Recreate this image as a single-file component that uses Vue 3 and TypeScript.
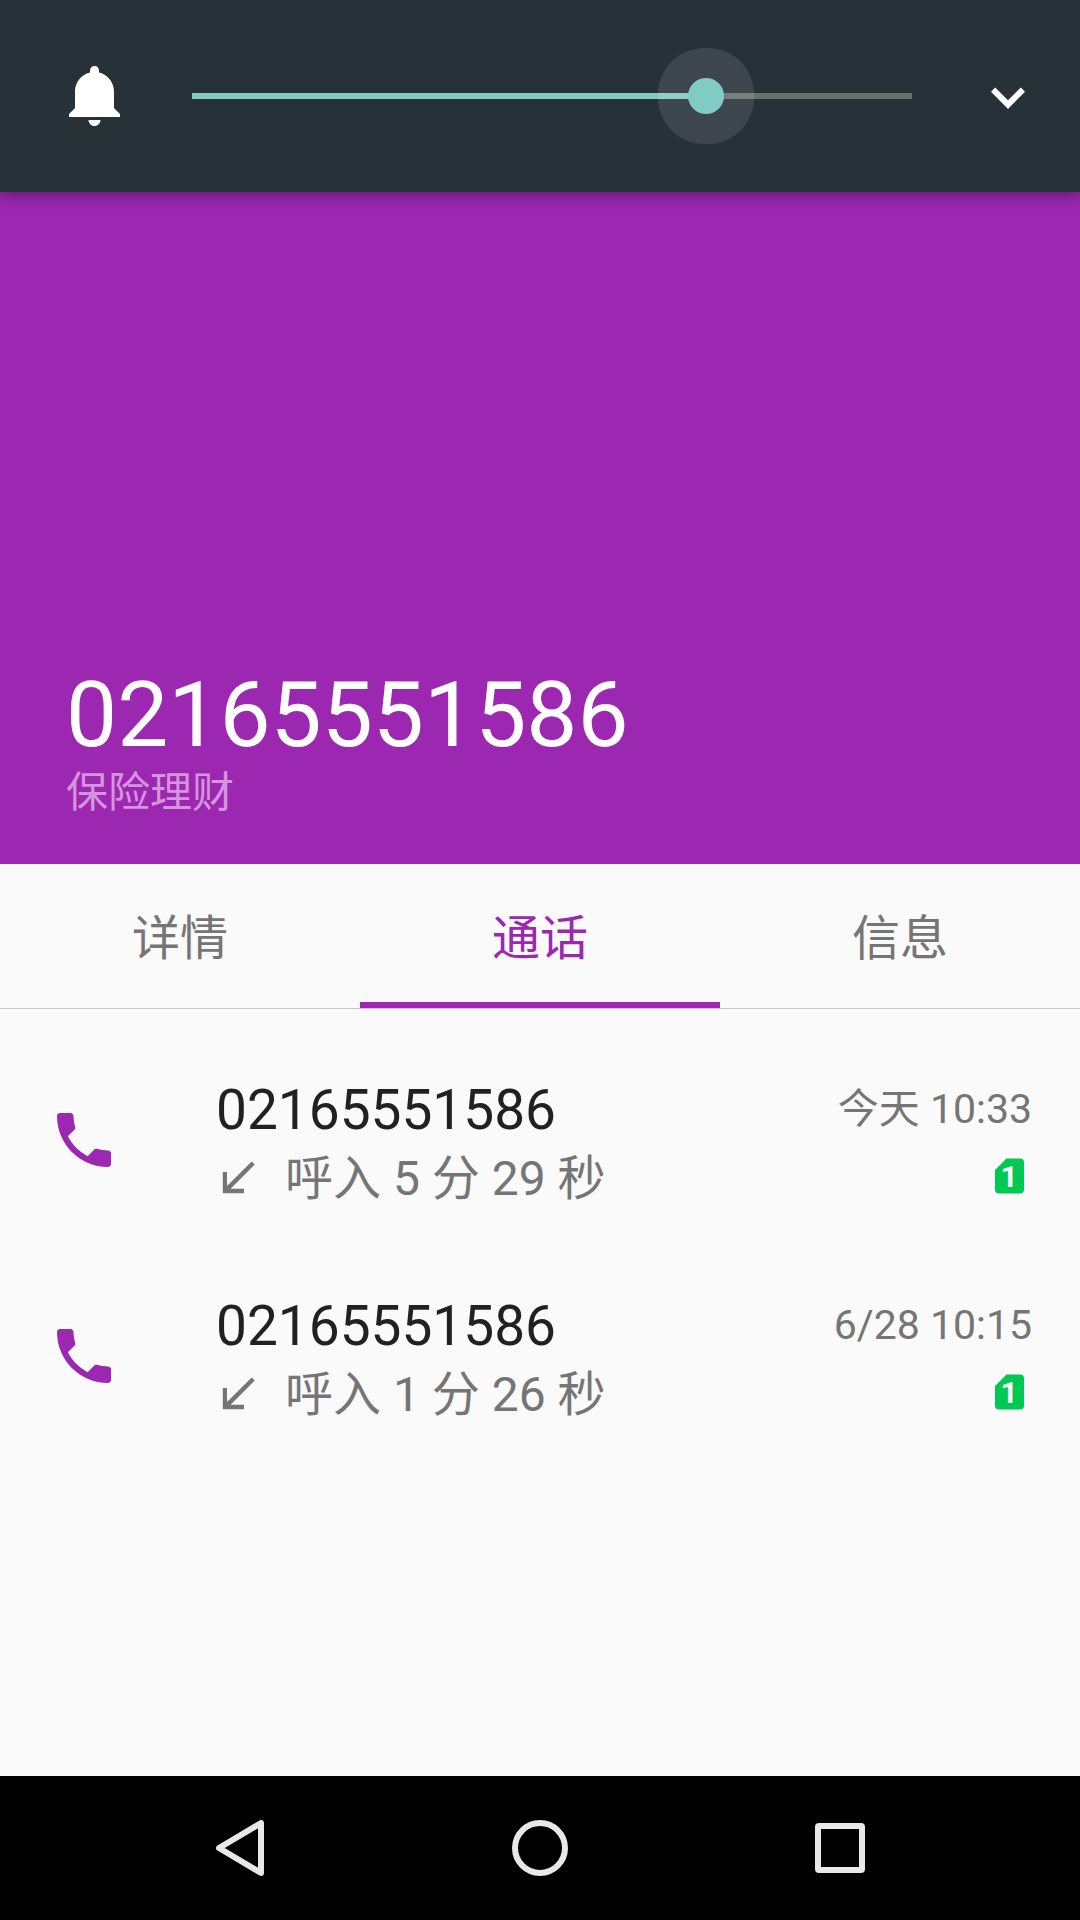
<script setup lang="ts">
import { computed, ref } from 'vue'

interface Call {
  id: number
  number: string
  duration: string
  time: string
  sim: number
}

const maxVolume = 7
const volume = ref(5)
const fill = computed(() => volume.value / maxVolume)

const tabs = ['详情', '通话', '信息']
const activeTab = ref(1)

const calls: Call[] = [
  { id: 1, number: '02165551586', duration: '呼入 5 分 29 秒', time: '今天 10:33', sim: 1 },
  { id: 2, number: '02165551586', duration: '呼入 1 分 26 秒', time: '6/28 10:15', sim: 1 },
]
</script>

<template>
  <div class="screen">
    <section class="volume">
      <svg class="icon" viewBox="0 0 24 24" aria-hidden="true">
        <path
          fill="#fff"
          d="M11.5 22c1.1 0 2-.9 2-2h-4c0 1.1.9 2 2 2zm6.5-6v-5.5c0-3.07-2.13-5.64-5-6.32V3.5c0-.83-.67-1.5-1.5-1.5S10 2.67 10 3.5v.68c-2.87.68-5 3.25-5 6.32V16l-2 2v1h17v-1l-2-2z"
        />
      </svg>
      <input
        v-model.number="volume"
        class="slider"
        type="range"
        min="0"
        :max="maxVolume"
        aria-label="铃声音量"
        :style="{ '--fill': fill }"
      />
      <button class="plain" type="button" aria-label="展开">
        <svg class="icon" viewBox="0 0 72 72" aria-hidden="true">
          <path fill="#fff" d="M19 31.7l4.2-4.2L36 40.3l12.8-12.8 4.2 4.2L36 49z" />
        </svg>
      </button>
    </section>

    <header class="hero">
      <h1 class="title">02165551586</h1>
      <p class="subtitle">保险理财</p>
    </header>

    <nav class="tabs" role="tablist">
      <button
        v-for="(tab, i) in tabs"
        :key="tab"
        class="tab"
        :class="{ active: i === activeTab }"
        type="button"
        role="tab"
        :aria-selected="i === activeTab"
        @click="activeTab = i"
      >
        {{ tab }}
      </button>
    </nav>

    <ul class="calls">
      <li v-for="call in calls" :key="call.id" class="call">
        <button class="plain dial" type="button" aria-label="拨打">
          <svg class="icon" viewBox="0 0 24 24" aria-hidden="true">
            <path
              fill="#9c27b0"
              d="M6.62 10.79c1.44 2.83 3.76 5.14 6.59 6.59l2.2-2.2c.27-.27.67-.36 1.02-.24 1.12.37 2.33.57 3.57.57.55 0 1 .45 1 1V20c0 .55-.45 1-1 1-9.39 0-17-7.61-17-17 0-.55.45-1 1-1h3.5c.55 0 1 .45 1 1 0 1.25.2 2.45.57 3.57.11.35.03.74-.25 1.02l-2.2 2.2z"
            />
          </svg>
        </button>
        <div class="info">
          <div class="number">{{ call.number }}</div>
          <div class="detail">
            <svg class="small-icon" viewBox="0 0 48 48" aria-hidden="true">
              <path fill="#757575" d="M35.6 6.4l3.2 3.2L14.6 33.8H28v4.4H6.8V17H11v14z" />
            </svg>
            <span>{{ call.duration }}</span>
          </div>
        </div>
        <div class="meta">
          <time class="time">{{ call.time }}</time>
          <svg class="small-icon" viewBox="0 0 48 48" role="img" aria-label="SIM 卡">
            <path
              fill="#00c853"
              d="M22.5 6.5H36a4 4 0 0 1 4 4v27a4 4 0 0 1-4 4H15a4 4 0 0 1-4-4V18z"
            />
            <text class="sim-number" x="25" y="35" text-anchor="middle">{{ call.sim }}</text>
          </svg>
        </div>
      </li>
    </ul>

    <footer class="system-bar">
      <button class="plain" type="button" aria-label="返回">
        <svg class="icon" viewBox="0 0 72 72" aria-hidden="true">
          <path
            d="M57 11v50L15 36z"
            fill="none"
            stroke="#e8e8e8"
            stroke-width="6"
            stroke-linejoin="round"
          />
        </svg>
      </button>
      <button class="plain" type="button" aria-label="主屏幕">
        <svg class="icon" viewBox="0 0 72 72" aria-hidden="true">
          <circle cx="36" cy="36" r="25" fill="none" stroke="#e8e8e8" stroke-width="6" />
        </svg>
      </button>
      <button class="plain" type="button" aria-label="最近任务">
        <svg class="icon" viewBox="0 0 72 72" aria-hidden="true">
          <rect x="14" y="14" width="44" height="44" rx="1" fill="none" stroke="#e8e8e8" stroke-width="6" stroke-linejoin="round" />
        </svg>
      </button>
    </footer>
  </div>
</template>

<style>
body {
  margin: 0;
  background: #fafafa;
}
</style>

<style scoped>
.screen {
  display: flex;
  flex-direction: column;
  min-height: 100vh;
  background: #fafafa;
  color: #212121;
  font-family: Roboto, 'Noto Sans CJK SC', sans-serif;
}

.plain {
  display: block;
  padding: 0;
  border: 0;
  background: none;
  cursor: pointer;
}

.icon {
  display: block;
  flex: none;
  width: 72px;
  height: 72px;
}

.small-icon {
  display: block;
  flex: none;
  width: 48px;
  height: 48px;
}

.volume {
  display: flex;
  align-items: center;
  gap: 42px;
  padding: 60px 36px 60px 60px;
  background: #263238;
  box-shadow: 0 4px 14px rgba(0, 0, 0, 0.35);
  z-index: 1;
}

.slider {
  flex: 1;
  min-width: 0;
  height: 36px;
  margin: 0;
  appearance: none;
  background-color: transparent;
  background-image: linear-gradient(#80cbc4, #80cbc4), linear-gradient(#677073, #677073);
  background-repeat: no-repeat;
  background-position: 18px center;
  background-size:
    calc((100% - 36px) * var(--fill)) 6px,
    calc(100% - 36px) 6px;
}

.slider::-webkit-slider-thumb {
  appearance: none;
  width: 36px;
  height: 36px;
  border-radius: 50%;
  background: #80cbc4;
  box-shadow: 0 0 0 30px rgba(255, 255, 255, 0.1);
}

.hero {
  display: flex;
  flex-direction: column;
  justify-content: flex-end;
  box-sizing: border-box;
  min-height: 35vh;
  padding: 41px 66px;
  background: #9c27b0;
}

.title {
  margin: 0;
  color: #fff;
  font-size: 91px;
  font-weight: 400;
  line-height: 96px;
}

.subtitle {
  margin: 0;
  color: #d595de;
  font-size: 42px;
  line-height: 60px;
}

.tabs {
  display: flex;
  border-bottom: 1px solid #c8c8c8;
}

.tab {
  flex: 1;
  height: 144px;
  padding: 2px 0 0;
  border: 0;
  border-bottom: 6px solid transparent;
  background: none;
  color: #757575;
  font-family: inherit;
  font-size: 48px;
  cursor: pointer;
}

.tab.active {
  border-bottom-color: #9c27b0;
  color: #9c27b0;
}

.calls {
  flex: 1;
  margin: 0;
  padding: 23px 0 0;
  list-style: none;
}

.call {
  display: flex;
  align-items: flex-start;
  padding: 45px 48px 33px;
}

.dial {
  margin: 27px 96px 0 0;
}

.info {
  flex: 1;
}

.number {
  font-size: 55px;
  line-height: 66px;
}

.detail {
  display: flex;
  align-items: center;
  gap: 21px;
  color: #757575;
  font-size: 48px;
  line-height: 72px;
}

.meta {
  display: flex;
  flex-direction: column;
  align-items: flex-end;
  gap: 11px;
}

.time {
  color: #757575;
  font-size: 41px;
  line-height: 64px;
}

.sim-number {
  fill: #fff;
  font-size: 30px;
  font-weight: 700;
}

.system-bar {
  display: flex;
  justify-content: center;
  gap: 228px;
  padding: 36px 0;
  background: #000;
}
</style>
